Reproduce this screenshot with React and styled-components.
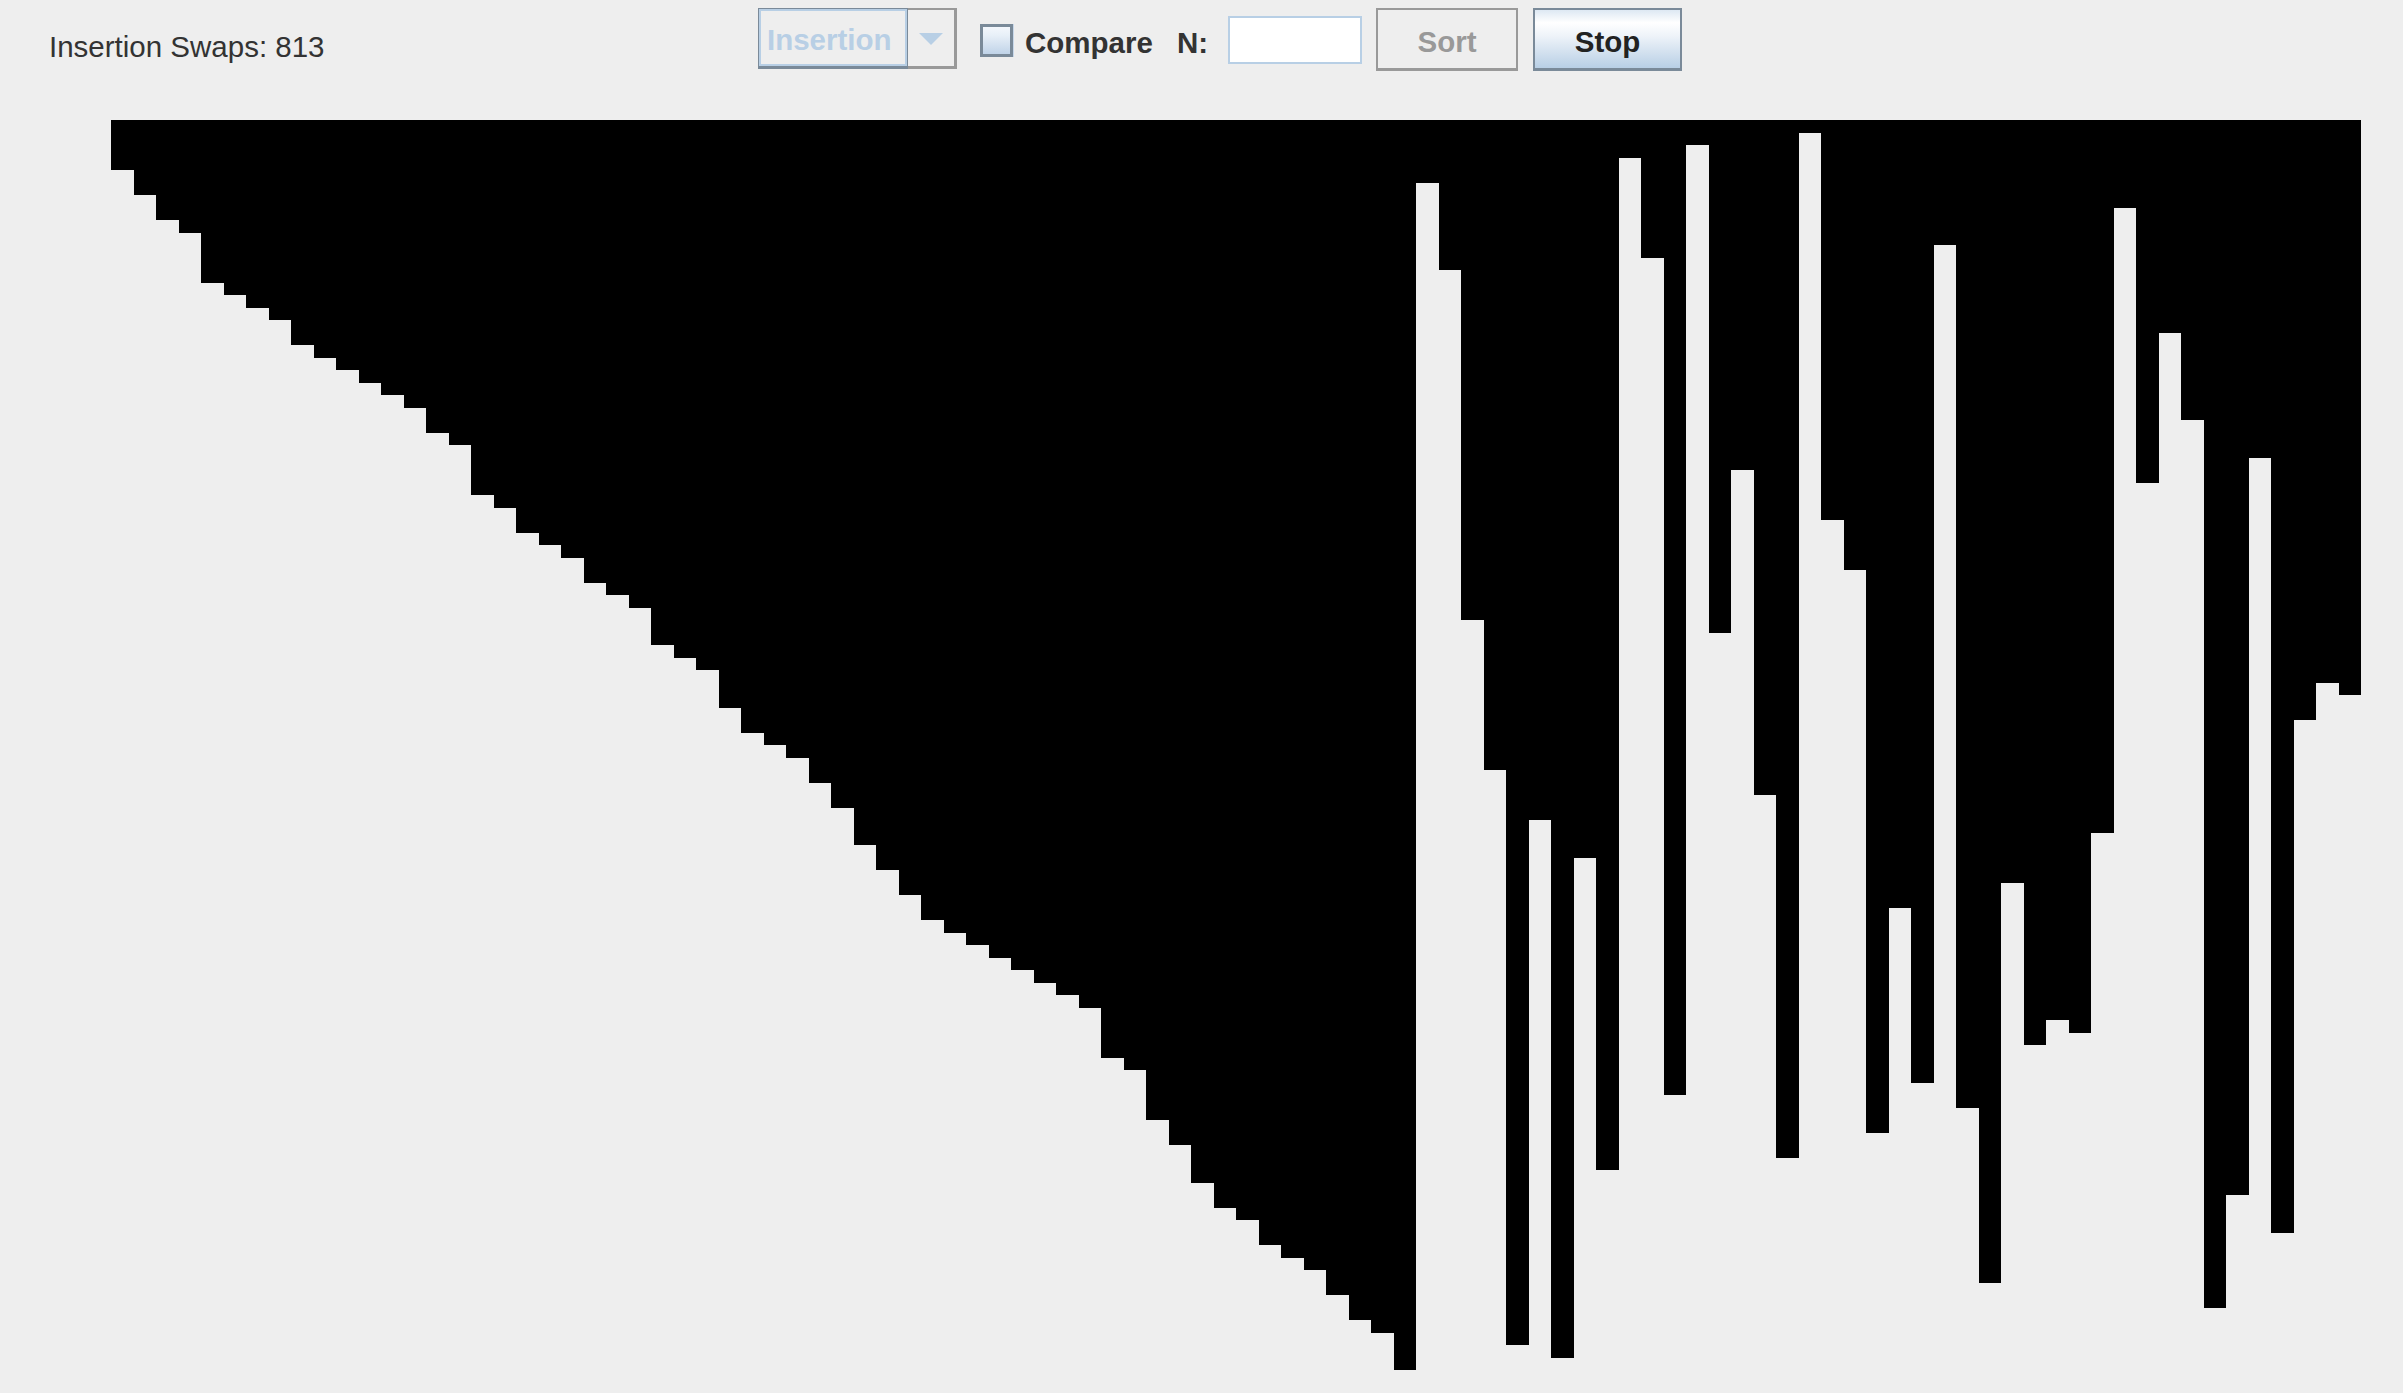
import React from "react";
import styled, { createGlobalStyle } from "styled-components";

// current state of the array: first 58 already sorted, rest untouched
const sortedPart = [
  4, 6, 8, 9, 13, 14, 15, 16, 18, 19, 20, 21, 22, 23, 25, 26, 30, 31, 33, 34,
  35, 37, 38, 39, 42, 43, 44, 47, 49, 50, 51, 53, 55, 58, 60, 62, 64, 65, 66,
  67, 68, 69, 70, 71, 75, 76, 80, 82, 85, 87, 88, 90, 91, 92, 94, 96, 97, 100,
];
const restPart = [
  5, 12, 40, 52, 98, 56, 99, 59, 84, 3, 11, 78, 2, 41, 28, 54, 83, 1, 32, 36,
  81, 63, 77, 10, 79, 93, 61, 74, 72, 73, 57, 7, 29, 17, 24, 95, 86, 27, 89,
  48, 45, 46,
];
const values = [...sortedPart, ...restPart];

const GlobalStyle = createGlobalStyle`
  html, body {
    margin: 0;
    padding: 0;
    background: #eeeeee;
  }
  body {
    font-family: "Liberation Sans", Arial, sans-serif;
  }
`;

const App = () => {
  return (
    <Page>
      <GlobalStyle />
      <Header>
        <SwapLabel>Insertion Swaps: 813</SwapLabel>
        <Toolbar>
          <Combo>
            <ComboField>Insertion</ComboField>
            <ComboArrow>
              <Arrow />
            </ComboArrow>
          </Combo>
          <CheckBox />
          <Label $ml={12}>Compare</Label>
          <Label $ml={24}>N:</Label>
          <Field />
          <SortButton>Sort</SortButton>
          <StopButton>Stop</StopButton>
        </Toolbar>
      </Header>
      <Chart>
        {values.map((v, i) => (
          <Bar key={i} $v={v} />
        ))}
      </Chart>
    </Page>
  );
};

const Page = styled.div`
  min-height: 100vh;
  background: #eeeeee;
`;

const Header = styled.div`
  display: grid;
  grid-template-columns: 758px auto;
  align-items: start;
  height: 120px;
`;

const SwapLabel = styled.div`
  padding-left: 49px;
  margin-top: 30px;
  font-size: 29.5px;
  line-height: 34px;
  color: #333333;
  white-space: nowrap;
`;

const Toolbar = styled.div`
  display: flex;
  align-items: center;
  height: 63px;
  margin-top: 8px;
`;

const Combo = styled.div`
  display: flex;
  height: 61px;
  align-self: flex-start;
`;

const ComboField = styled.div`
  box-sizing: border-box;
  width: 150px;
  height: 61px;
  display: flex;
  align-items: center;
  padding: 4px 0 0 8px;
  border: 1px solid #7a8a99;
  border-bottom-width: 3px;
  box-shadow: inset 0 0 0 2px #b8cfe5;
  background: #eeeeee;
  color: #b8cfe5;
  font-weight: bold;
  font-size: 29.5px;
`;

const ComboArrow = styled.div`
  box-sizing: border-box;
  width: 49px;
  height: 61px;
  display: flex;
  align-items: center;
  justify-content: center;
  border: 2px solid #999999;
  border-left: none;
  border-right-width: 3px;
  border-bottom-width: 3px;
  padding-top: 1px;
`;

const Arrow = styled.div`
  width: 0;
  height: 0;
  border-left: 12.5px solid transparent;
  border-right: 12.5px solid transparent;
  border-top: 12px solid #b8cfe5;
`;

const CheckBox = styled.div`
  box-sizing: border-box;
  width: 33px;
  height: 33px;
  margin-left: 23px;
  margin-top: 2px;
  border: 3px solid #7a8a99;
  background: linear-gradient(#f3f7fc 0%, #e8f0f8 30%, #c0d3e8 100%);
  box-shadow: 1px 0 0 #c8d8ea;
`;

const Label = styled.div`
  margin-left: ${(p) => p.$ml}px;
  margin-top: 6px;
  font-weight: bold;
  font-size: 29.5px;
  color: #333333;
  white-space: nowrap;
`;

const Field = styled.div`
  box-sizing: border-box;
  width: 134px;
  height: 48px;
  margin-left: 20px;
  border: 2px solid #b8cfe5;
  background: #ffffff;
`;

const Button = styled.div`
  box-sizing: border-box;
  height: 63px;
  display: flex;
  align-items: center;
  justify-content: center;
  padding-top: 6px;
  border: 2px solid;
  border-bottom-width: 3px;
  font-weight: bold;
  font-size: 29.5px;
`;

const SortButton = styled(Button)`
  width: 142px;
  margin-left: 14px;
  border-color: #999999;
  background: #eeeeee;
  color: #999999;
`;

const StopButton = styled(Button)`
  width: 149px;
  margin-left: 15px;
  border-color: #7a8a99;
  background: linear-gradient(
    #dde8f3 0%,
    #ffffff 22%,
    #eef3f9 45%,
    #b8cfe5 100%
  );
  color: #222222;
`;

const Chart = styled.div`
  display: flex;
  align-items: flex-start;
  width: 2250px;
  margin-left: 111px;
`;

const Bar = styled.div`
  flex: 0 0 22.5px;
  height: ${(p) => p.$v * 12.5}px;
  background: #000000;
`;

export default App;
